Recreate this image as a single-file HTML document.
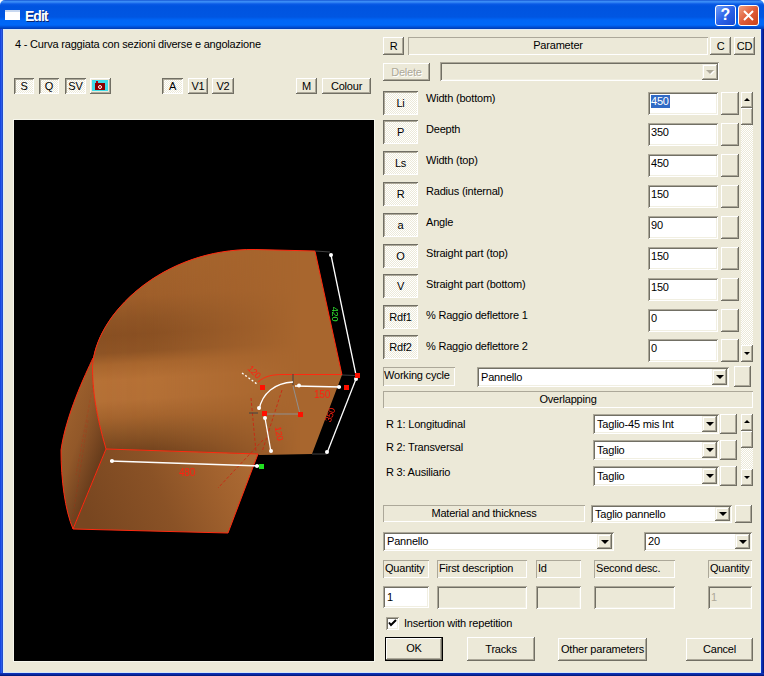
<!DOCTYPE html>
<html><head><meta charset="utf-8">
<style>
*{box-sizing:border-box;margin:0;padding:0}
html,body{width:764px;height:676px;overflow:hidden;background:#fff}
body{position:relative;font-family:"Liberation Sans",sans-serif;font-size:11px;letter-spacing:-0.2px;color:#000}
.a{position:absolute}
#title{left:0;top:0;width:764px;height:29px;
 background:linear-gradient(180deg,#0a44c8 0px,#3a8cf6 1px,#3a8cf6 2px,#0a5ae6 4px,#0054e0 6px,#0056e2 17px,#0066f6 20px,#0068f8 25px,#0050d8 27px,#003cb0 29px);
 border-radius:5px 5px 0 0}
#lb{left:0;top:29px;width:3px;height:647px;background:linear-gradient(90deg,#0032d8 0,#2a5ae8 1px,#2a5ae8 2px,#1a3ca8 3px)}
#rb{left:761px;top:29px;width:3px;height:647px;background:linear-gradient(90deg,#0c36c0 0,#0c36c0 1px,#0a2aa8 1px,#0a2aa8 2px,#001a88 2px)}
#bb{left:0;top:673px;width:764px;height:3px;background:linear-gradient(180deg,#0c32b8 0,#0c32b8 1px,#0a28a0 1px,#0a28a0 2px,#001a80 2px)}
#client{left:3px;top:29px;width:758px;height:644px;background:#ece9d8;border-left:1px solid #d8ecfc;border-top:1px solid #dde8f4;border-right:1px solid #dceefa;border-bottom:1px solid #d4e6f8}
.btn{position:absolute;background:#ece9d8;box-shadow:inset -1px -1px #716f64,inset 1px 1px #fff,inset -2px -2px #aca899;text-align:center;white-space:nowrap}
.prs{position:absolute;background:repeating-conic-gradient(#fff 0 25%,#ece9d8 0 50%) 0 0/2px 2px;box-shadow:inset 1px 1px #716f64,inset -1px -1px #fff,inset 2px 2px #aca899;text-align:center;white-space:nowrap}
.ed{position:absolute;background:#fff;box-shadow:inset 1px 1px #aca899,inset -1px -1px #fff,inset 2px 2px #716f64,inset -2px -2px #f1efe2;white-space:nowrap}
.edd{position:absolute;background:#ece9d8;box-shadow:inset 1px 1px #aca899,inset -1px -1px #fff,inset 2px 2px #716f64,inset -2px -2px #f1efe2;white-space:nowrap}
.st{position:absolute;box-shadow:inset 1px 1px #aca899,inset -1px -1px #fff;white-space:nowrap}
.tx{position:absolute;white-space:nowrap}
.dd{position:absolute;background:#ece9d8;box-shadow:inset -1px -1px #716f64,inset 1px 1px #f1efe2,inset -2px -2px #aca899,inset 2px 2px #fff}
.dd:after{content:"";position:absolute;left:50%;top:50%;margin-left:-4px;margin-top:-2px;border-left:4px solid transparent;border-right:4px solid transparent;border-top:4px solid #000}
.ddis:after{border-top-color:#aca899;filter:drop-shadow(1px 1px 0 #fff)}
.sb{position:absolute;background:repeating-conic-gradient(#fff 0 25%,#ece9d8 0 50%) 0 0/2px 2px}
</style></head><body>
<div id="title" class="a"></div>
<div id="lb" class="a"></div>
<div id="rb" class="a"></div>
<div id="bb" class="a"></div>
<div id="client" class="a"></div>
<div class="a" style="left:5px;top:10px;width:15px;height:10px;background:#fff;box-shadow:inset 0 2px #c8d8f0"></div>
<div class="tx" style="left:25px;top:8px;font-size:14px;font-weight:bold;letter-spacing:-1px;color:#fff;text-shadow:1px 1px #0a246a">Edit</div>
<div class="a" style="left:715px;top:5px;width:21px;height:21px;border:1px solid #fff;border-radius:3px;background:linear-gradient(135deg,#6e9cf8,#2a62e8 50%,#1848d0)"></div>
<div class="tx" style="left:715px;top:6px;width:21px;text-align:center;font-size:16px;font-weight:bold;color:#fff;letter-spacing:0">?</div>
<div class="a" style="left:738px;top:5px;width:21px;height:21px;border:1px solid #fff;border-radius:3px;background:linear-gradient(135deg,#f0a080,#e05c38 50%,#c84018)"></div>
<svg class="a" style="left:738px;top:5px" width="21" height="21"><path d="M6 6L15 15M15 6L6 15" stroke="#fff" stroke-width="2"/></svg>
<div class="tx" style="left:15px;top:38px">4 - Curva raggiata con sezioni diverse e angolazione</div>
<div class="prs" style="left:14px;top:78px;width:20px;height:16px;line-height:16px;">S</div>
<div class="prs" style="left:39px;top:78px;width:20px;height:16px;line-height:16px;">Q</div>
<div class="prs" style="left:65px;top:78px;width:21px;height:16px;line-height:16px;">SV</div>
<div class="btn" style="left:90px;top:78px;width:21px;height:16px;line-height:16px;"></div>
<div class="a" style="left:92px;top:80px;width:16px;height:11px;background:#40dce8"></div>
<div class="a" style="left:95px;top:83px;width:10px;height:7px;background:#8a0000"></div>
<div class="a" style="left:96px;top:81px;width:2px;height:2px;background:#b00010"></div>
<div class="a" style="left:98px;top:85px;width:4px;height:4px;border-radius:50%;border:1px solid #fff;background:#c00000"></div>
<div class="prs" style="left:162px;top:78px;width:21px;height:16px;line-height:16px;">A</div>
<div class="btn" style="left:188px;top:78px;width:20px;height:16px;line-height:16px;">V1</div>
<div class="btn" style="left:212px;top:78px;width:22px;height:16px;line-height:16px;">V2</div>
<div class="btn" style="left:296px;top:78px;width:21px;height:16px;line-height:16px;">M</div>
<div class="btn" style="left:322px;top:78px;width:49px;height:16px;line-height:16px;">Colour</div>
<div class="a" style="left:13px;top:119px;width:362px;height:543px;background:#f6f6ec"></div>
<div class="a" style="left:14px;top:120px;width:360px;height:541px;background:#000"></div>
<svg class="a" style="left:14px;top:120px" width="360" height="541" viewBox="14 120 360 541">
<defs>
<linearGradient id="gTop" x1="150" y1="250" x2="162" y2="455" gradientUnits="userSpaceOnUse">
<stop offset="0" stop-color="#a4632c"/>
<stop offset="0.22" stop-color="#9e5e2a"/>
<stop offset="0.33" stop-color="#8e5425"/>
<stop offset="0.405" stop-color="#884f22"/>
<stop offset="0.49" stop-color="#8e5425"/>
<stop offset="0.546" stop-color="#a8662e"/>
<stop offset="0.624" stop-color="#b67136"/>
<stop offset="0.722" stop-color="#b47036"/>
<stop offset="0.805" stop-color="#a4642e"/>
<stop offset="0.888" stop-color="#8a5426"/>
<stop offset="1" stop-color="#6a3d1b"/>
</linearGradient>
<linearGradient id="gFade" x1="90" y1="0" x2="300" y2="0" gradientUnits="userSpaceOnUse">
<stop offset="0" stop-color="#fff"/>
<stop offset="0.3" stop-color="#fff" stop-opacity="0.95"/>
<stop offset="0.6" stop-color="#fff" stop-opacity="0.55"/>
<stop offset="1" stop-color="#fff" stop-opacity="0"/>
</linearGradient>
<mask id="mFade"><rect x="14" y="120" width="360" height="541" fill="url(#gFade)"/></mask>
<linearGradient id="gFront" x1="90" y1="525" x2="245" y2="455" gradientUnits="userSpaceOnUse">
<stop offset="0" stop-color="#784620"/>
<stop offset="0.45" stop-color="#8a5226"/>
<stop offset="0.8" stop-color="#a2622e"/>
<stop offset="1" stop-color="#ac6a33"/>
</linearGradient>
<linearGradient id="gLeft" x1="61" y1="440" x2="104" y2="455" gradientUnits="userSpaceOnUse">
<stop offset="0" stop-color="#9a5e2c"/>
<stop offset="0.35" stop-color="#925829"/>
<stop offset="0.7" stop-color="#7a4822"/>
<stop offset="1" stop-color="#643a1a"/>
</linearGradient>
</defs>
<path id="topface" d="M315,251 L342,375 L312,454 L259,455 L258,454 L106,449 C96,415 92.5,390 92.5,367 C94.7,314.5 162.6,248.1 255.1,249.5 Z" fill="#a8662e"/>
<path d="M315,251 L342,375 L312,454 L259,455 L258,454 L106,449 C96,415 92.5,390 92.5,367 C94.7,314.5 162.6,248.1 255.1,249.5 Z" fill="url(#gTop)" mask="url(#mFade)"/>
<path d="M106,449 L73,529 C65,510 61,480 61,450 C66,415 85,375 93,358 L92.5,367 C92.5,390 96,415 106,449 Z" fill="url(#gLeft)"/>
<path d="M106,449 L258,454 L228,533 L73,529 Z" fill="url(#gFront)"/>
<g fill="none" stroke="#ff2a10" stroke-width="1">
<path d="M92.5,367 C94.7,314.5 162.6,248.1 255.1,249.5 L315,251"/>
<path d="M92.5,367 C92.5,390 96,415 106,449 L258,454 M106,449 L73,529 L228,533 L258,454"/>
<path d="M73,529 C65,510 61,480 61,450 C66,415 85,375 93,358"/>
<path d="M315,251 L342,375"/>
<path d="M258,382 C265,376 272,374.5 284,374.5 L342,374.5"/>
</g>
<g fill="none" stroke="#d02010" stroke-width="1" stroke-dasharray="3,2" opacity="0.8">
<path d="M263,440 L218,488"/>
<path d="M93,385 L76,475" opacity="0.3"/>
<path d="M88,420 L72,522" opacity="0.25"/>
<path d="M251,398 L256,452"/>
<path d="M282,390 L262,452"/>
</g>
<g stroke="#404040" stroke-width="1" fill="none">
<path d="M315,251 L330,252"/>
<path d="M342,375 L356,375.5"/>
<path d="M312,454 L327,454"/>
<path d="M293,374 L293,385"/>
<path d="M249,413 L258,413"/>
</g>
<g stroke="#909090" stroke-width="1" fill="none">
<path d="M293,386 L300,414 L265,414"/>
</g>
<g stroke="#fff" stroke-width="1.3" fill="none">
<path d="M331,255 L356,375"/>
<path d="M356,379 L327,453"/>
<path d="M295,386 L341,387"/>
<path d="M293,382 C275,383 262,393 259,410"/>
<path d="M265,418 L271,452"/>
<path d="M110,461 L261,466"/>
<path d="M242,373 L257,384" stroke-dasharray="2,2"/>
</g>
<g fill="#fff">
<circle cx="331" cy="255" r="2"/><circle cx="356" cy="379" r="2"/><circle cx="327" cy="452" r="2"/>
<circle cx="299" cy="385.5" r="2"/><circle cx="339" cy="387" r="2"/><circle cx="259" cy="408" r="2"/>
<circle cx="265" cy="418" r="2"/><circle cx="271" cy="451" r="2"/><circle cx="112" cy="461" r="2"/><circle cx="257" cy="466" r="2"/>
</g>
<g fill="#ff1000">
<rect x="355" y="373" width="5" height="5"/><rect x="344" y="385" width="5" height="5"/>
<rect x="260" y="385" width="5" height="5"/><rect x="298" y="412" width="5" height="5"/><rect x="262" y="411" width="5" height="5"/>
</g>
<rect x="259" y="464" width="5" height="5" fill="#20e020"/>
<g font-family="Liberation Sans" font-size="9" fill="#ff2010">
<text x="187" y="476" text-anchor="middle" font-size="10">480</text>
<text x="322" y="398" text-anchor="middle" font-size="10">150</text>
<text transform="translate(333,416) rotate(-70)" text-anchor="middle">350</text>
<text transform="translate(276,434) rotate(80)" text-anchor="middle">120</text>
<text transform="translate(252,374) rotate(45)" text-anchor="middle">120</text>
</g>
<text transform="translate(332,314) rotate(90)" text-anchor="middle" font-family="Liberation Sans" font-size="9" fill="#30e030">420</text>
</svg>

<div class="btn" style="left:383px;top:37px;width:21px;height:18px;line-height:18px;">R</div>
<div class="st" style="left:408px;top:37px;width:300px;height:18px;line-height:17px;text-align:center">Parameter</div>
<div class="btn" style="left:710px;top:37px;width:21px;height:18px;line-height:18px;">C</div>
<div class="btn" style="left:734px;top:37px;width:21px;height:18px;line-height:18px;">CD</div>
<div class="btn" style="left:383px;top:63px;width:47px;height:18px;line-height:18px;color:#aca899;text-shadow:1px 1px #fff">Delete</div>
<div class="edd" style="left:440px;top:62px;width:279px;height:19px"></div>
<div class="dd ddis" style="left:702px;top:64px;width:16px;height:16px"></div>
<div class="prs" style="left:383px;top:91px;width:35px;height:24px;line-height:24px;">Li</div>
<div class="tx" style="left:426px;top:92px">Width (bottom)</div>
<div class="ed" style="left:648px;top:92px;width:70px;height:23px"></div><div class="tx" style="left:651px;top:95px;height:13px;line-height:13px;background:#316ac5;color:#fff;padding-right:1px">450</div>
<div class="btn" style="left:721px;top:92px;width:18px;height:23px;line-height:23px;"></div>
<div class="prs" style="left:383px;top:120px;width:35px;height:24px;line-height:24px;">P</div>
<div class="tx" style="left:426px;top:123px">Deepth</div>
<div class="ed" style="left:648px;top:123px;width:70px;height:23px;padding-left:3px;padding-top:3px;line-height:13px">350</div>
<div class="btn" style="left:721px;top:123px;width:18px;height:23px;line-height:23px;"></div>
<div class="prs" style="left:383px;top:151px;width:35px;height:24px;line-height:24px;">Ls</div>
<div class="tx" style="left:426px;top:154px">Width (top)</div>
<div class="ed" style="left:648px;top:154px;width:70px;height:23px;padding-left:3px;padding-top:3px;line-height:13px">450</div>
<div class="btn" style="left:721px;top:154px;width:18px;height:23px;line-height:23px;"></div>
<div class="prs" style="left:383px;top:182px;width:35px;height:24px;line-height:24px;">R</div>
<div class="tx" style="left:426px;top:185px">Radius (internal)</div>
<div class="ed" style="left:648px;top:185px;width:70px;height:23px;padding-left:3px;padding-top:3px;line-height:13px">150</div>
<div class="btn" style="left:721px;top:185px;width:18px;height:23px;line-height:23px;"></div>
<div class="prs" style="left:383px;top:213px;width:35px;height:24px;line-height:24px;">a</div>
<div class="tx" style="left:426px;top:216px">Angle</div>
<div class="ed" style="left:648px;top:216px;width:70px;height:23px;padding-left:3px;padding-top:3px;line-height:13px">90</div>
<div class="btn" style="left:721px;top:216px;width:18px;height:23px;line-height:23px;"></div>
<div class="prs" style="left:383px;top:244px;width:35px;height:24px;line-height:24px;">O</div>
<div class="tx" style="left:426px;top:247px">Straight part (top)</div>
<div class="ed" style="left:648px;top:247px;width:70px;height:23px;padding-left:3px;padding-top:3px;line-height:13px">150</div>
<div class="btn" style="left:721px;top:247px;width:18px;height:23px;line-height:23px;"></div>
<div class="prs" style="left:383px;top:274px;width:35px;height:24px;line-height:24px;">V</div>
<div class="tx" style="left:426px;top:278px">Straight part (bottom)</div>
<div class="ed" style="left:648px;top:278px;width:70px;height:23px;padding-left:3px;padding-top:3px;line-height:13px">150</div>
<div class="btn" style="left:721px;top:278px;width:18px;height:23px;line-height:23px;"></div>
<div class="prs" style="left:383px;top:305px;width:35px;height:24px;line-height:24px;">Rdf1</div>
<div class="tx" style="left:426px;top:309px">% Raggio deflettore 1</div>
<div class="ed" style="left:648px;top:309px;width:70px;height:23px;padding-left:3px;padding-top:3px;line-height:13px">0</div>
<div class="btn" style="left:721px;top:309px;width:18px;height:23px;line-height:23px;"></div>
<div class="prs" style="left:383px;top:335px;width:35px;height:24px;line-height:24px;">Rdf2</div>
<div class="tx" style="left:426px;top:340px">% Raggio deflettore 2</div>
<div class="ed" style="left:648px;top:339px;width:70px;height:23px;padding-left:3px;padding-top:3px;line-height:13px">0</div>
<div class="btn" style="left:721px;top:339px;width:18px;height:23px;line-height:23px;"></div>
<div class="sb" style="left:741px;top:92px;width:12px;height:270px"></div>
<div class="btn" style="left:741px;top:92px;width:12px;height:16px;line-height:16px;"></div>
<div class="a" style="left:744px;top:98px;border-left:3px solid transparent;border-right:3px solid transparent;border-bottom:3px solid #000"></div>
<div class="btn" style="left:741px;top:108px;width:12px;height:17px;line-height:17px;"></div>
<div class="btn" style="left:741px;top:345px;width:12px;height:17px;line-height:17px;"></div>
<div class="a" style="left:744px;top:352px;border-left:3px solid transparent;border-right:3px solid transparent;border-top:3px solid #000"></div>
<div class="st" style="left:383px;top:367px;width:72px;height:19px;line-height:16px;padding-left:1px">Working cycle</div>
<div class="ed" style="left:477px;top:367px;width:252px;height:20px;padding-left:4px;line-height:20px">Pannello</div>
<div class="dd" style="left:712px;top:369px;width:15px;height:16px"></div>
<div class="btn" style="left:734px;top:366px;width:17px;height:21px;line-height:21px;"></div>
<div class="st" style="left:383px;top:391px;width:370px;height:17px;line-height:16px;text-align:center">Overlapping</div>
<div class="tx" style="left:386px;top:418px">R 1: Longitudinal</div>
<div class="ed" style="left:593px;top:414px;width:126px;height:20px;padding-left:4px;line-height:20px">Taglio-45 mis Int</div>
<div class="dd" style="left:702px;top:416px;width:15px;height:16px"></div>
<div class="btn" style="left:720px;top:414px;width:17px;height:20px;line-height:20px;"></div>
<div class="tx" style="left:386px;top:441px">R 2: Transversal</div>
<div class="ed" style="left:593px;top:440px;width:126px;height:20px;padding-left:4px;line-height:20px">Taglio</div>
<div class="dd" style="left:702px;top:442px;width:15px;height:16px"></div>
<div class="btn" style="left:720px;top:440px;width:17px;height:20px;line-height:20px;"></div>
<div class="tx" style="left:386px;top:466px">R 3: Ausiliario</div>
<div class="ed" style="left:593px;top:466px;width:126px;height:20px;padding-left:4px;line-height:20px">Taglio</div>
<div class="dd" style="left:702px;top:468px;width:15px;height:16px"></div>
<div class="btn" style="left:720px;top:466px;width:17px;height:20px;line-height:20px;"></div>
<div class="sb" style="left:741px;top:414px;width:12px;height:72px"></div>
<div class="btn" style="left:741px;top:414px;width:12px;height:17px;line-height:17px;"></div>
<div class="a" style="left:744px;top:420px;border-left:3px solid transparent;border-right:3px solid transparent;border-bottom:3px solid #000"></div>
<div class="btn" style="left:741px;top:431px;width:12px;height:17px;line-height:17px;"></div>
<div class="btn" style="left:741px;top:469px;width:12px;height:17px;line-height:17px;"></div>
<div class="a" style="left:744px;top:476px;border-left:3px solid transparent;border-right:3px solid transparent;border-top:3px solid #000"></div>
<div class="st" style="left:383px;top:505px;width:202px;height:17px;line-height:16px;text-align:center">Material and thickness</div>
<div class="ed" style="left:591px;top:505px;width:141px;height:18px;padding-left:4px;line-height:19px">Taglio pannello</div>
<div class="dd" style="left:715px;top:507px;width:15px;height:14px"></div>
<div class="btn" style="left:735px;top:505px;width:17px;height:18px;line-height:18px;"></div>
<div class="ed" style="left:383px;top:532px;width:231px;height:19px;padding-left:4px;line-height:19px">Pannello</div>
<div class="dd" style="left:597px;top:534px;width:15px;height:15px"></div>
<div class="ed" style="left:644px;top:532px;width:108px;height:19px;padding-left:4px;line-height:19px">20</div>
<div class="dd" style="left:735px;top:534px;width:15px;height:15px"></div>
<div class="st" style="left:383px;top:560px;width:46px;height:18px;line-height:16px;padding-left:2px">Quantity</div>
<div class="st" style="left:437px;top:560px;width:90px;height:18px;line-height:16px;padding-left:2px">First description</div>
<div class="st" style="left:536px;top:560px;width:45px;height:18px;line-height:16px;padding-left:2px">Id</div>
<div class="st" style="left:594px;top:560px;width:81px;height:18px;line-height:16px;padding-left:2px">Second desc.</div>
<div class="st" style="left:708px;top:560px;width:44px;height:18px;line-height:16px;padding-left:2px">Quantity</div>
<div class="ed" style="left:383px;top:586px;width:46px;height:22px;padding-left:4px;line-height:22px">1</div>
<div class="edd" style="left:437px;top:586px;width:90px;height:23px"></div>
<div class="edd" style="left:536px;top:586px;width:45px;height:23px"></div>
<div class="edd" style="left:594px;top:586px;width:81px;height:23px"></div>
<div class="edd" style="left:708px;top:586px;width:44px;height:23px;padding-left:3px;line-height:22px;color:#aca899">1</div>
<div class="ed" style="left:386px;top:617px;width:13px;height:13px"></div>
<svg class="a" style="left:386px;top:617px" width="13" height="13"><path d="M3 5.5L5 8L10 3" stroke="#000" stroke-width="2" fill="none"/></svg>
<div class="tx" style="left:404px;top:617px">Insertion with repetition</div>
<div class="btn" style="left:385px;top:637px;width:58px;height:24px;line-height:23px;box-shadow:inset 0 0 0 1px #000,inset -2px -2px #716f64,inset 2px 2px #fff,inset -3px -3px #aca899">OK</div>
<div class="btn" style="left:467px;top:637px;width:68px;height:24px;line-height:24px;">Tracks</div>
<div class="btn" style="left:558px;top:638px;width:89px;height:23px;line-height:23px;">Other parameters</div>
<div class="btn" style="left:686px;top:638px;width:67px;height:23px;line-height:23px;">Cancel</div>
</body></html>
